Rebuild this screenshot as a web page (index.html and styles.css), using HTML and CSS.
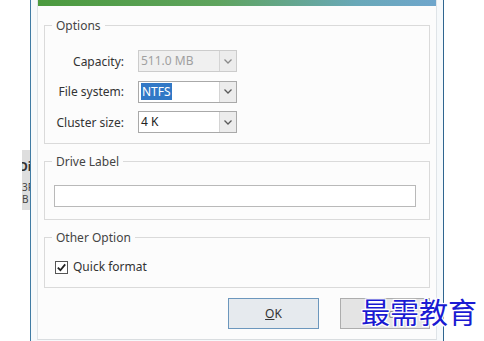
FILE: index.html
```html
<!DOCTYPE html>
<html lang="en">

<head>
  <meta charset="UTF-8">
  <meta name="viewport" content="width=device-width, initial-scale=1.0">
  <title>Format Partition</title>
  <link rel="stylesheet" href="styles.css">
</head>

<body>

  <div class="desk">
    <!-- window behind the dialog -->
    <div class="behind">
      <div class="behind-panel">
        <span class="behind-title">Di</span>
        <span class="behind-line">3F</span>
        <span class="behind-line">B</span>
      </div>
    </div>

    <div class="dialog">
      <div class="dialog-inner">
        <div class="banner"></div>

        <fieldset class="group group-options">
          <legend>Options</legend>
          <div class="option-grid">
            <label class="field-label">Capacity:</label>
            <div class="combo combo-disabled">
              <span class="combo-text">511.0 MB</span>
              <span class="combo-arrow"><svg width="8" height="5" viewBox="0 0 8 5"><path d="M0.5 0.5 L4 4 L7.5 0.5" fill="none" stroke="#8a8a8a" stroke-width="1.3"/></svg></span>
            </div>

            <label class="field-label">File system:</label>
            <div class="combo">
              <span class="combo-text"><span class="selected">NTFS</span></span>
              <span class="combo-arrow"><svg width="8" height="5" viewBox="0 0 8 5"><path d="M0.5 0.5 L4 4 L7.5 0.5" fill="none" stroke="#5a5a5a" stroke-width="1.3"/></svg></span>
            </div>

            <label class="field-label">Cluster size:</label>
            <div class="combo">
              <span class="combo-text">4 K</span>
              <span class="combo-arrow"><svg width="8" height="5" viewBox="0 0 8 5"><path d="M0.5 0.5 L4 4 L7.5 0.5" fill="none" stroke="#5a5a5a" stroke-width="1.3"/></svg></span>
            </div>
          </div>
        </fieldset>

        <fieldset class="group group-label">
          <legend>Drive Label</legend>
          <div class="text-input"></div>
        </fieldset>

        <fieldset class="group group-other">
          <legend>Other Option</legend>
          <div class="check-row">
            <span class="checkbox"><svg width="11" height="11" viewBox="0 0 11 11"><path d="M1.8 5.6 L4.4 8.2 L9.2 2.4" fill="none" stroke="#222" stroke-width="1.8"/></svg></span>
            <span class="check-text">Quick format</span>
          </div>
        </fieldset>

        <div class="buttons">
          <button class="btn btn-default"><u>O</u>K</button>
          <button class="btn">Cancel</button>
        </div>
      </div>
    </div>
  </div>

  <div class="watermark">最需教育</div>

</body>

</html>
```

FILE: styles.css
```css
body {
  margin: 0;
  padding: 0;
  background-color: #ffffff;
  font-family: 'Noto Sans', 'Liberation Sans', sans-serif;
  font-size: 12px;
  color: #333;
  overflow: hidden;
}

.desk {
  display: flex;
  height: 341px;
}

/* window behind */
.behind {
  width: 30px;
  padding-top: 150px;
}

.behind-panel {
  margin-left: 22px;
  width: 8px;
  height: 60px;
  background-color: #dedede;
  overflow: hidden;
  display: flex;
  flex-direction: column;
}

.behind-title {
  margin-left: -3px;
  margin-top: 10px;
  font-weight: bold;
  font-size: 12px;
  line-height: 14px;
  color: #333;
}

.behind-line {
  margin-left: 0;
  font-size: 10px;
  line-height: 12px;
  color: #444;
  white-space: nowrap;
}

.behind-title + .behind-line {
  margin-top: 7px;
}

/* dialog frame */
.dialog {
  width: 400px;
  padding: 0 6px;
  border-left: 1px solid #3f7ba4;
  border-right: 1px solid #2f6590;
  background-color: #f6f9fb;
}

.dialog-inner {
  height: 339px;
  border-left: 1px solid #dfe4e8;
  border-right: 1px solid #dfe4e8;
  border-bottom: 1px solid #d9dde0;
  background-color: #fcfcfc;
  padding: 0 6px;
}

.banner {
  height: 6px;
  margin: 0 -6px;
  background: linear-gradient(to right, #4c9a3e, #5fa45e 45%, #69a8b8 80%, #6fa6cc);
}

/* group boxes */
.group {
  margin: 9px 0 0 0;
  padding: 16px 7px 10px 7px;
  border: 1px solid #dadada;
  min-width: 0;
}

.group legend {
  padding: 0 4px;
  line-height: 17px;
  color: #444;
}

.group-options {
  margin-top: 11px;
}

.option-grid {
  display: grid;
  grid-template-columns: 72px 99px;
  grid-auto-rows: 22px;
  column-gap: 14px;
  row-gap: 8.5px;
}

.field-label {
  justify-self: end;
  align-self: center;
  color: #333;
}

.combo {
  display: flex;
  border: 1px solid #a9a9a9;
  background-color: #fff;
}

.combo-text {
  flex: 1;
  padding-left: 2px;
  line-height: 20px;
  color: #222;
}

.combo-disabled {
  border-color: #cccccc;
  background-color: #f0f0f0;
}

.combo-disabled .combo-text {
  color: #a0a0a0;
}

.selected {
  background-color: #3178c6;
  color: #fff;
  padding: 0 1px;
}

.combo-arrow {
  width: 16px;
  border-left: 1px solid #d4d4d4;
  background-color: #ececec;
  display: flex;
  align-items: center;
  justify-content: center;
}

.group-label {
  padding-top: 15px;
  padding-bottom: 12px;
}

.text-input {
  margin-left: 2px;
  width: 360px;
  height: 20px;
  border: 1px solid #b9b9b9;
  background-color: #fff;
}

.group-other {
  padding-top: 13px;
  padding-bottom: 12px;
}

.check-row {
  display: flex;
  align-items: center;
  gap: 5px;
  padding-left: 3px;
}

.checkbox {
  width: 11px;
  height: 11px;
  border: 1px solid #555;
  background-color: #fff;
  display: flex;
}

.check-text {
  line-height: 16px;
  color: #333;
}

/* buttons */
.buttons {
  display: flex;
  justify-content: flex-end;
  gap: 21px;
  margin-top: 10px;
}

.btn {
  width: 91px;
  height: 31px;
  font-family: 'Noto Sans', 'Liberation Sans', sans-serif;
  font-size: 12px;
  color: #333;
  background-color: #e4e4e4;
  border: 1px solid #adadad;
  padding: 0;
}

.btn + .btn {
  width: 90px;
  color: #888;
}

.btn-default {
  border-color: #6c97bd;
  background-color: #e6eaee;
}

/* watermark over the page */
.watermark {
  position: absolute;
  left: 361px;
  top: 291px;
  font-family: 'Noto Sans CJK SC', sans-serif;
  font-size: 29px;
  line-height: 40px;
  color: #1a1ad2;
  text-shadow: -1px -1px 0 #fff, 1px -1px 0 #fff, -1px 1px 0 #fff, 1px 1px 0 #fff, 0 0 3px #fff;
}
```
